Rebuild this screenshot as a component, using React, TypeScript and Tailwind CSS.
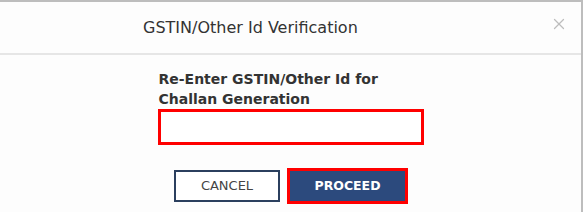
import { X } from 'lucide-react';

// GSTIN re-entry modal
export default function App() {
  return (
    <div
      className="relative h-[212px] w-[585px] overflow-hidden bg-white"
      style={{ fontFamily: 'Tahoma, "DejaVu Sans", sans-serif' }}
    >
      <div className="h-[212px] w-[583px] border-t-2 border-r-2 border-[#bdbdbd] bg-[#fdfdfd]">
        <div className="relative flex h-[53px] items-center border-b-2 border-[#e6e6e6]">
          <h4 className="pl-[143px] text-[16px] leading-none text-[#333]">GSTIN/Other Id Verification</h4>
          <X className="absolute top-[13px] right-[13px] h-[18px] w-[18px] text-[#bdbdbd]" strokeWidth={1.7} />
        </div>
        <div className="mx-auto w-[266px] pt-[14px]">
          <label className="block pl-[1px] text-[14px] leading-[20px] font-bold text-[#333]">
            Re-Enter GSTIN/Other Id for
            <br />
            Challan Generation
          </label>
          <input
            type="text"
            className="block h-[36px] w-[266px] border-[3px] border-[#ff0000] bg-white outline-none"
          />
          <div className="mt-[25px] flex items-start justify-center gap-[7px] pl-[1px]">
            <button className="h-[32px] w-[106px] border-2 border-[#2b3f5e] bg-white text-[13px] text-[#444] uppercase">
              Cancel
            </button>
            <button className="mt-[-2px] h-[36px] w-[121px] border-[3px] border-[#ff0000] bg-[#2c4a7d] text-[12.5px] font-bold text-white uppercase">
              Proceed
            </button>
          </div>
        </div>
      </div>
    </div>
  );
}
